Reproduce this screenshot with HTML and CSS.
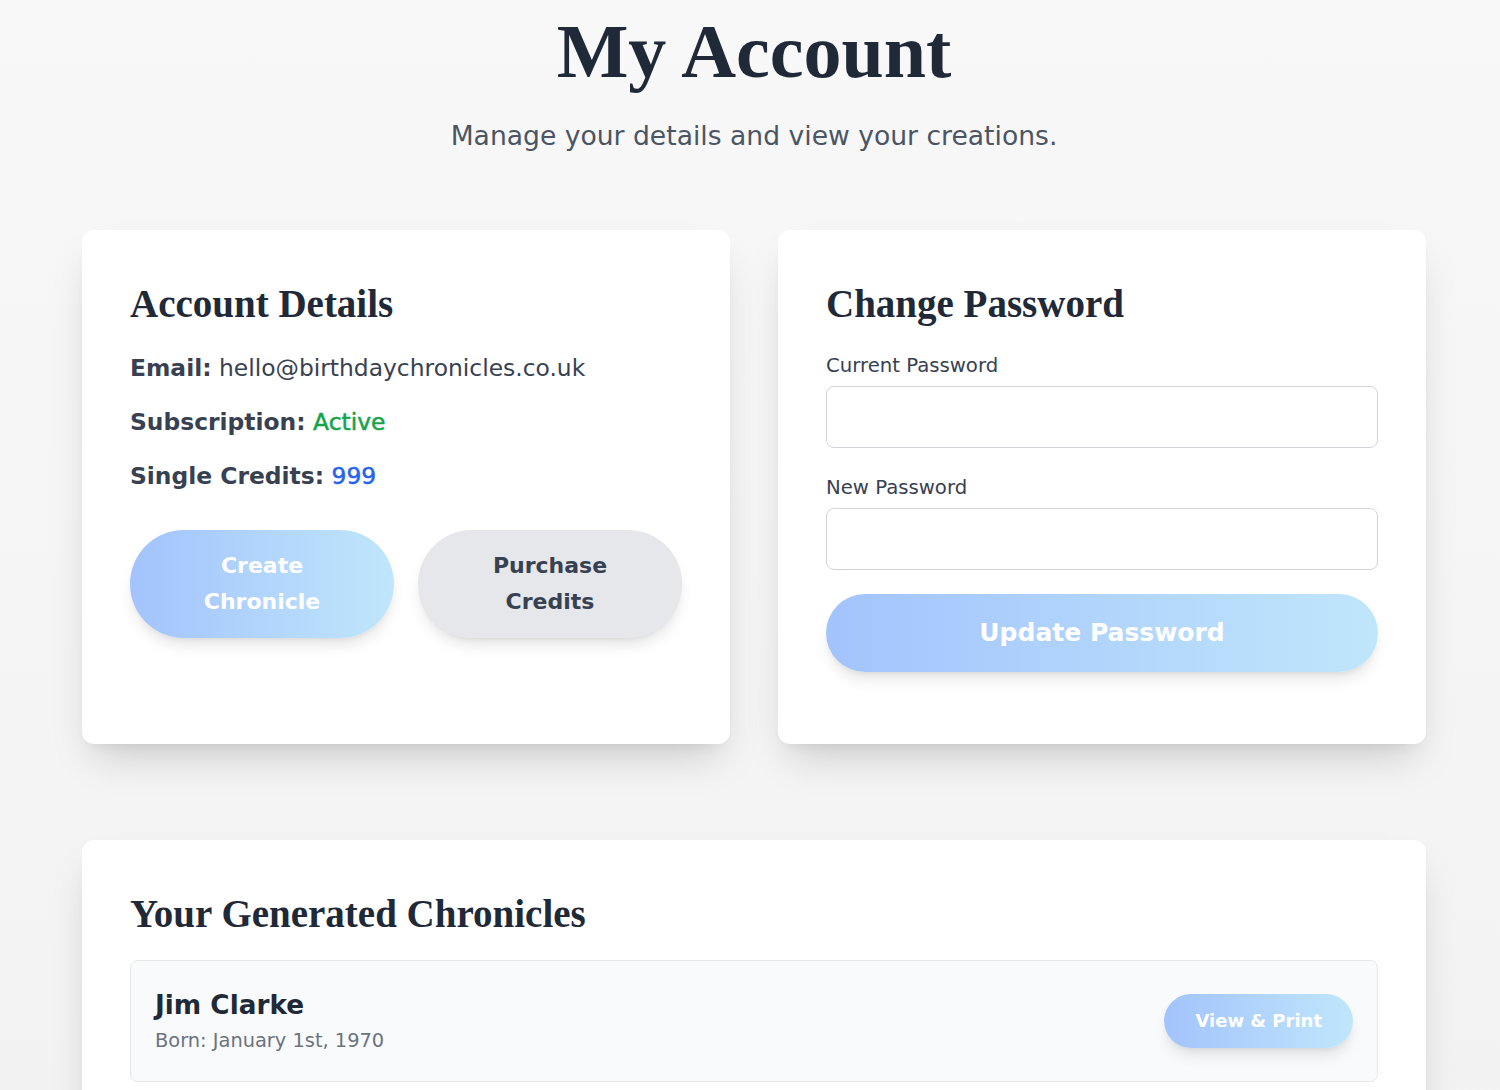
FILE: index.html
```html
<!DOCTYPE html>
<html lang="en">
<head>
<meta charset="utf-8">
<title>My Account</title>
<link rel="stylesheet" href="styles.css">
</head>
<body>
<main class="page">
  <header class="page-header">
    <h1 class="page-title">My Account</h1>
    <p class="page-subtitle">Manage your details and view your creations.</p>
  </header>

  <section class="card-grid">
    <div class="card">
      <h2 class="card-title">Account Details</h2>
      <div class="details">
        <p class="detail-row"><span class="detail-label">Email:</span> hello@birthdaychronicles.co.uk</p>
        <p class="detail-row"><span class="detail-label">Subscription:</span> <span class="status-active">Active</span></p>
        <p class="detail-row"><span class="detail-label">Single Credits:</span> <span class="credits">999</span></p>
      </div>
      <div class="actions">
        <button class="btn btn-gradient btn-large" type="button">Create Chronicle</button>
        <button class="btn btn-gray btn-large" type="button">Purchase Credits</button>
      </div>
    </div>

    <div class="card">
      <h2 class="card-title">Change Password</h2>
      <form class="password-form">
        <label class="field-label" for="current">Current Password</label>
        <input class="field-input" id="current" type="password">
        <label class="field-label field-label-next" for="new">New Password</label>
        <input class="field-input" id="new" type="password">
        <button class="btn btn-gradient btn-wide" type="button">Update Password</button>
      </form>
    </div>
  </section>

  <section class="card card-chronicles">
    <h2 class="card-title chronicles-title">Your Generated Chronicles</h2>
    <div class="chronicle-item">
      <div class="chronicle-info">
        <p class="chronicle-name">Jim Clarke</p>
        <p class="chronicle-born">Born: January 1st, 1970</p>
      </div>
      <button class="btn btn-gradient btn-small" type="button">View &amp; Print</button>
    </div>
  </section>
</main>
</body>
</html>
```

FILE: styles.css
```css
* {
  box-sizing: border-box;
}

html, body {
  margin: 0;
  padding: 0;
}

body {
  min-height: 100vh;
  background: linear-gradient(to bottom, #f8f8f8, #f2f2f2);
  font-family: "DejaVu Sans", "Liberation Sans", sans-serif;
  color: #374151;
}

.page {
  padding: 9px 74px 48px 82px;
}

.page-header {
  text-align: center;
}

.page-title {
  margin: 0;
  font-family: "Liberation Serif", "DejaVu Serif", serif;
  font-weight: 700;
  font-size: 76px;
  line-height: 84px;
  color: #1f2937;
}

.page-subtitle {
  margin: 25px 0 0;
  font-size: 26.6px;
  line-height: 36px;
  color: #4b5563;
}

.card-grid {
  margin-top: 76px;
  display: grid;
  grid-template-columns: 1fr 1fr;
  gap: 48px;
}

.card {
  background: #ffffff;
  border-radius: 12px;
  padding: 48px;
  box-shadow: 0 22px 40px -12px rgba(0, 0, 0, 0.18), 0 8px 14px -8px rgba(0, 0, 0, 0.08);
}

.card-title {
  margin: 0 0 22px;
  font-family: "Liberation Serif", "DejaVu Serif", serif;
  font-weight: 700;
  font-size: 39px;
  line-height: 52px;
  color: #1f2937;
}

.details {
  display: flex;
  flex-direction: column;
  gap: 22px;
}

.detail-row {
  margin: 0;
  font-size: 23.4px;
  line-height: 32px;
  color: #374151;
}

.detail-label {
  font-weight: 700;
}

.status-active {
  color: #16a34a;
  -webkit-text-stroke: 0.5px #16a34a;
}

.credits {
  color: #2563eb;
  -webkit-text-stroke: 0.5px #2563eb;
}

.actions {
  margin-top: 38px;
  display: flex;
  gap: 24px;
}

.btn {
  border: none;
  border-radius: 9999px;
  font-family: "DejaVu Sans", "Liberation Sans", sans-serif;
  font-weight: 700;
  cursor: pointer;
  box-shadow: 0 10px 15px -3px rgba(0, 0, 0, 0.1), 0 4px 6px -4px rgba(0, 0, 0, 0.1);
}

.btn-gradient {
  background: linear-gradient(to right, #a3c3fd, #c0e6fb);
  color: #ffffff;
}

.btn-gray {
  background: #e5e7eb;
  color: #374151;
}

.btn-large {
  flex: 1 1 0;
  padding: 18px 40px;
  font-size: 22px;
  line-height: 36px;
}

.password-form {
  display: flex;
  flex-direction: column;
  margin-bottom: 24px;
}

.field-label {
  font-size: 19.7px;
  line-height: 28px;
  color: #374151;
  margin-bottom: 6px;
}

.field-label-next {
  margin-top: 26px;
}

.field-input {
  height: 62px;
  border: 1px solid #d1d5db;
  border-radius: 8px;
  background: #ffffff;
  padding: 0 16px;
  font-size: 18px;
}

.btn-wide {
  margin-top: 24px;
  padding: 24px;
  font-size: 25px;
  line-height: 30px;
}

.card-chronicles {
  margin-top: 96px;
}

.chronicles-title {
  margin-bottom: 20px;
}

.chronicle-item {
  display: flex;
  align-items: center;
  justify-content: space-between;
  padding: 26px 24px;
  background: #f9fafb;
  border: 1px solid #e5e7eb;
  border-radius: 8px;
}

.chronicle-name {
  margin: 0 0 4px;
  font-size: 26.3px;
  line-height: 36px;
  font-weight: 700;
  color: #1f2937;
}

.chronicle-born {
  margin: 0;
  font-size: 19.4px;
  line-height: 28px;
  color: #6b7280;
}

.btn-small {
  padding: 14px 31px;
  font-size: 18px;
  line-height: 26px;
}
```
